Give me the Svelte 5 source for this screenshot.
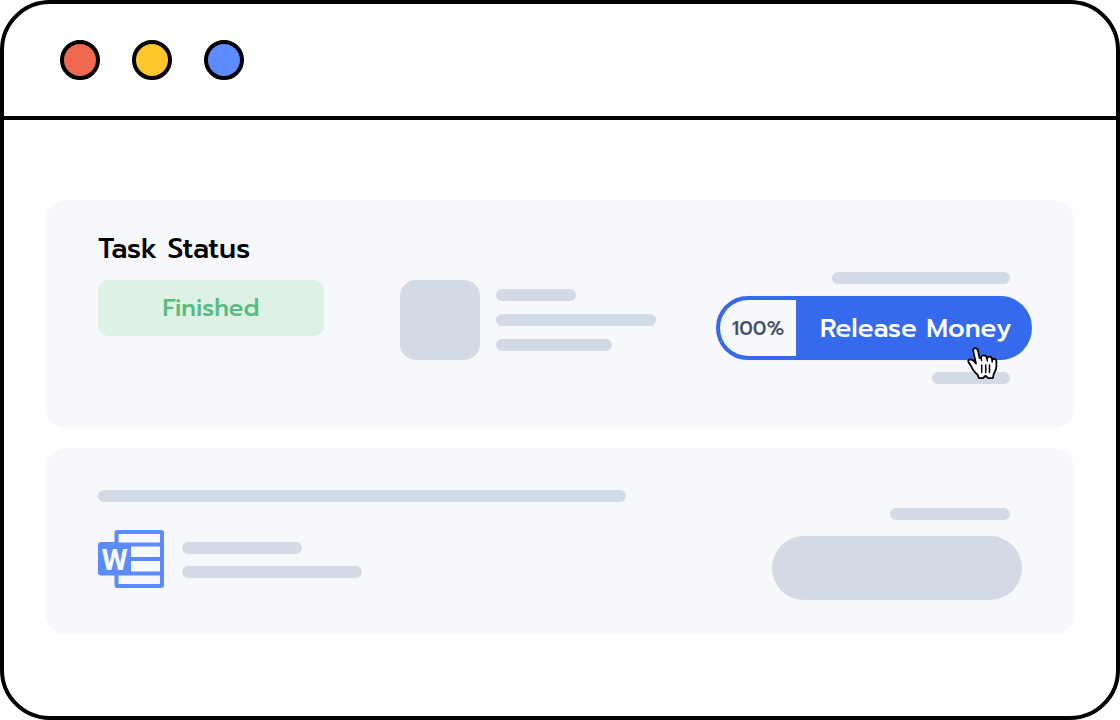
<script lang="ts">
	const dots = ['red', 'yellow', 'blue'];
	let progress = $state(100);
</script>

<div class="window">
	<header>
		{#each dots as dot}
			<span class="dot {dot}"></span>
		{/each}
	</header>

	<main>
		<section class="card task">
			<div class="status">
				<h2>Task Status</h2>
				<span class="badge">Finished</span>
			</div>
			<div class="media">
				<div class="thumb"></div>
				<div class="lines">
					<div class="bar w80"></div>
					<div class="bar w160"></div>
					<div class="bar w116"></div>
				</div>
			</div>
			<div class="actions">
				<div class="bar w178"></div>
				<button type="button" class="release">
					<span class="percent">{progress}%</span>
					<span class="label">Release Money</span>
					<svg class="pointer" width="32" height="34" viewBox="0 0 32 34" aria-hidden="true">
						<path
							d="M8.4 1.2C6.6 1.2 5.9 2.7 6.3 4.4L9 16.5C7.6 14.6 5.7 12.6 3.6 12.4C1.7 12.3.8 13.7 1.6 15.2C3 17.6 4 18.4 5 21C6.2 24 8.5 25.3 10.5 27.7C11.3 28.7 11 29.8 12 31L15.8 31.2L18.6 28.8L21.2 31.2H25.8C26.4 29.8 26.2 27.7 27.2 26C28.8 23.5 29.4 22 29.4 19.6V14.5C29.4 11.2 25.8 11 25.2 13.2C25.2 9.2 20.8 8.4 20 11.4C19.3 7.8 15 7.4 14 10.5L12.6 11L10.9 3.4C10.5 1.9 9.8 1.2 8.4 1.2Z"
							fill="#fff"
							stroke="#000"
							stroke-width="1.8"
							stroke-linejoin="round"
						/>
						<path
							d="M14.7 18V25.5M18.7 18V25.5M22.5 18V25.5M14 10.5L14.6 13.5M20 11.4L20.3 14M25.2 13.2V15"
							fill="none"
							stroke="#000"
							stroke-width="1.5"
							stroke-linecap="round"
						/>
					</svg>
				</button>
				<div class="bar w78"></div>
			</div>
		</section>

		<section class="card file">
			<div class="details">
				<div class="bar w528"></div>
				<div class="doc">
					<svg width="66" height="58" viewBox="0 0 66 58" aria-hidden="true">
						<path
							fill="#5c8bff"
							fill-rule="evenodd"
							d="M19 0H63Q66 0 66 3V55Q66 58 63 58H19Q16.5 58 16.5 55V45.5H3Q0 45.5 0 42.5V15Q0 12 3 12H16.5V3Q16.5 0 19 0ZM20.5 4V12.5H62V4ZM33 16.5V27H62V16.5ZM33 31V41.5H62V31ZM20.5 45.5V54H62V45.5Z"
						/>
						<text class="letter" x="16.5" y="40" text-anchor="middle">W</text>
					</svg>
					<div class="lines">
						<div class="bar w120"></div>
						<div class="bar w180"></div>
					</div>
				</div>
			</div>
			<div class="actions">
				<div class="bar w120"></div>
				<div class="pill"></div>
			</div>
		</section>
	</main>
</div>

<style>
	:global(body) { margin: 0; background: #fff; }
	.window {
		box-sizing: border-box;
		min-height: 100vh;
		border: 4px solid #000;
		border-radius: 50px;
		background: #fff;
		font-family: "Prompt", "Noto Sans", sans-serif;
		font-weight: 500;
	}
	header {
		display: flex;
		align-items: center;
		gap: 32px;
		height: 112px;
		padding: 0 56px;
		border-bottom: 4px solid #000;
	}
	.dot {
		box-sizing: border-box;
		width: 40px;
		height: 40px;
		border: 4px solid #000;
		border-radius: 50%;
	}
	.red { background: #f0694e; }
	.yellow { background: #ffc72b; }
	.blue { background: #5c8bff; }
	main {
		display: grid;
		gap: 20px;
		padding: 80px 42px;
	}
	.card {
		display: flex;
		align-items: flex-start;
		border-radius: 20px;
		background: #f6f8fc;
	}
	.task { padding: 32px 42px 44px 52px; }
	.file { padding: 42px 52px 34px; }
	.status {
		display: grid;
		gap: 14px;
		width: 226px;
	}
	h2 {
		margin: 0;
		color: #000;
		font-size: 28px;
		font-weight: 500;
		line-height: 34px;
	}
	.badge {
		border-radius: 10px;
		background: #ddf1e5;
		color: #5abb80;
		font-size: 24px;
		line-height: 56px;
		text-align: center;
	}
	.media {
		display: flex;
		gap: 16px;
		margin-left: 76px;
		padding-top: 48px;
	}
	.thumb {
		width: 80px;
		height: 80px;
		border-radius: 16px;
		background: #d3dae5;
	}
	.lines {
		display: grid;
		align-content: center;
		gap: 13px;
	}
	.bar {
		height: 12px;
		border-radius: 6px;
		background: #d3dae5;
	}
	.w78 { width: 78px; }
	.w80 { width: 80px; }
	.w116 { width: 116px; }
	.w120 { width: 120px; }
	.w160 { width: 160px; }
	.w178 { width: 178px; }
	.w180 { width: 180px; }
	.w528 { width: 528px; }
	.actions {
		display: flex;
		flex-direction: column;
		align-items: flex-end;
		margin-left: auto;
	}
	.task .actions { gap: 12px; padding-top: 40px; }
	.task .actions .bar { margin-right: 22px; }
	.file .actions { gap: 16px; padding-top: 18px; }
	.file .actions .bar { margin-right: 12px; }
	.release {
		position: relative;
		display: flex;
		box-sizing: border-box;
		width: 316px;
		height: 64px;
		padding: 0;
		border: 4px solid #366aec;
		border-radius: 32px;
		background: #366aec;
		color: #fff;
		font: inherit;
		line-height: 56px;
		cursor: pointer;
	}
	.percent {
		width: 76px;
		border-radius: 28px 0 0 28px;
		background: #f6f8fc;
		color: #475269;
		font-size: 20px;
	}
	.label {
		padding-left: 24px;
		font-size: 26px;
		line-height: 58px;
		white-space: nowrap;
	}
	.pointer {
		position: absolute;
		right: 29px;
		bottom: -25px;
	}
	.details {
		display: grid;
		gap: 28px;
	}
	.doc {
		display: flex;
		gap: 18px;
	}
	.doc svg { display: block; }
	.doc .lines { gap: 12px; padding-top: 2px; }
	.letter {
		fill: #f6f8fc;
		font-family: Roboto, sans-serif;
		font-size: 30px;
		font-weight: 700;
	}
	.pill {
		width: 250px;
		height: 64px;
		border-radius: 32px;
		background: #d3dae5;
	}
</style>
